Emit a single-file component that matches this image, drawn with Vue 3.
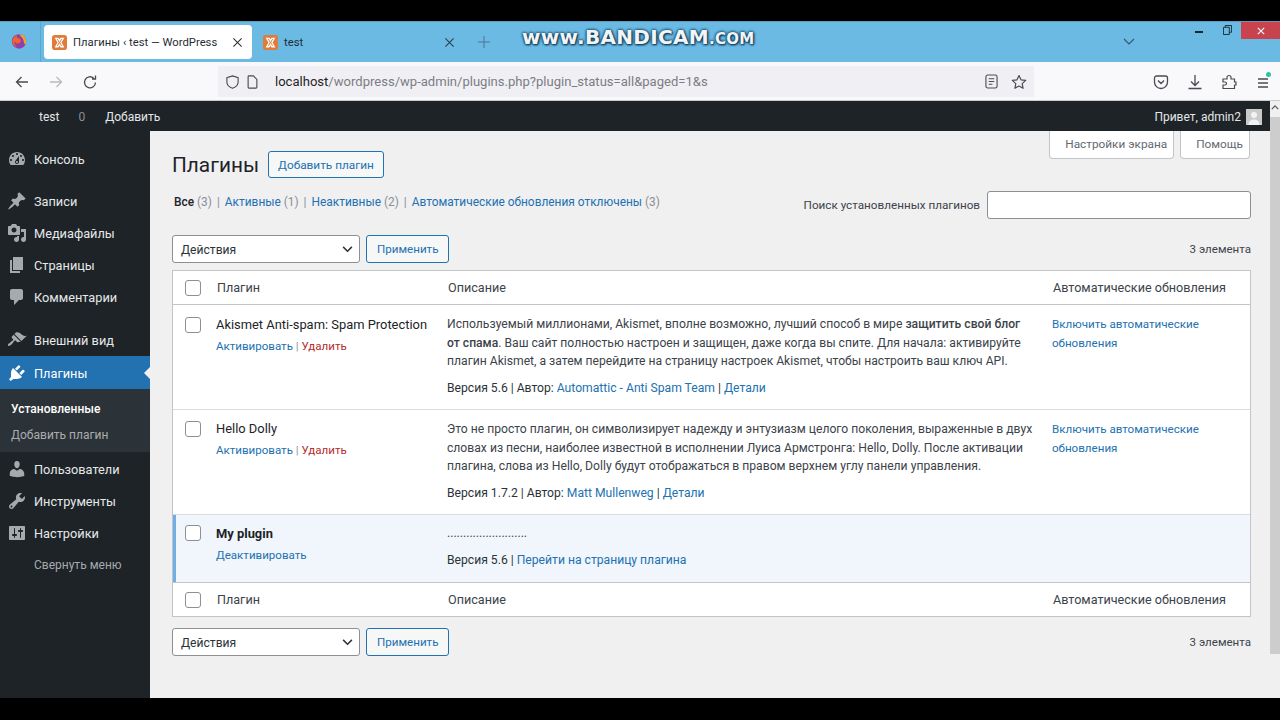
<script setup>
const menuTop = [
  { label: "Консоль", d: "M3.76 16h12.48c1.1-1.37 1.76-3.11 1.76-5 0-4.42-3.58-8-8-8s-8 3.58-8 8c0 1.89.66 3.63 1.76 5zM10 4c.55 0 1 .45 1 1s-.45 1-1 1-1-.45-1-1 .45-1 1-1zM6 6c.55 0 1 .45 1 1s-.45 1-1 1-1-.45-1-1 .45-1 1-1zm8 0c.55 0 1 .45 1 1s-.45 1-1 1-1-.45-1-1 .45-1 1-1zm-5.37 5.55L12 7v6c0 1.1-.9 2-2 2s-2-.9-2-2c0-.57.24-1.08.63-1.45zM4 10c.55 0 1 .45 1 1s-.45 1-1 1-1-.45-1-1 .45-1 1-1zm12 0c.55 0 1 .45 1 1s-.45 1-1 1-1-.45-1-1 .45-1 1-1zm-5 3c0-.55-.45-1-1-1s-1 .45-1 1 .45 1 1 1 1-.45 1-1z" },
];
const menuContent = [
  { label: "Записи", d: "M10.44 3.02l1.82-1.82 6.36 6.35-1.83 1.82c-1.05-.68-2.48-.57-3.41.36l-.75.75c-.92.93-1.04 2.35-.35 3.41l-1.83 1.82-2.41-2.41-2.8 2.79c-.42.42-3.38 2.71-3.8 2.29s1.86-3.39 2.28-3.81l2.79-2.79L4.1 9.36l1.83-1.82c1.05.69 2.48.57 3.4-.36l.75-.75c.93-.92 1.05-2.35.36-3.41z" },
  { label: "Медиафайлы", d: "M13 11V4c0-.55-.45-1-1-1h-1.67L9 1H5L3.67 3H2c-.55 0-1 .45-1 1v7c0 .55.45 1 1 1h10c.55 0 1-.45 1-1zM7 4.5c1.38 0 2.5 1.12 2.5 2.5S8.38 9.5 7 9.5 4.5 8.38 4.5 7 5.62 4.5 7 4.5zM14 6h5v10.5c0 1.38-1.12 2.5-2.5 2.5S14 17.88 14 16.5s1.12-2.5 2.5-2.5c.17 0 .34.02.5.05V9h-3V6zm-4 8.05V13h2v3.5c0 1.38-1.12 2.5-2.5 2.5S7 17.88 7 16.5 8.12 14 9.5 14c.17 0 .34.02.5.05z" },
  { label: "Страницы", d: "M6 15V2h10v13H6zm-1 1h8v2H3V5h2v11z" },
  { label: "Комментарии", d: "M5 2h9c1.1 0 2 .9 2 2v7c0 1.1-.9 2-2 2h-2l-5 5v-5H5c-1.1 0-2-.9-2-2V4c0-1.1.9-2 2-2z" },
];
const appearance = { label: "Внешний вид", d: "M14.48 11.06L7.41 3.99l1.5-1.5c.5-.56 2.3-.47 3.51.32 1.21.8 1.43 1.28 2.91 2.1 1.18.64 2.45 1.26 4.45.85zm-.71.71L6.7 4.7 4.93 6.47c-.39.39-.39 1.02 0 1.41l1.06 1.06c.39.39.39 1.03 0 1.42-.6.6-1.43 1.11-2.21 1.69-.35.26-.7.53-1.01.84C1.43 13.23.4 14.85 1.2 15.65s2.42-.23 3.76-1.57c.31-.31.58-.66.85-1.02.57-.78 1.08-1.61 1.69-2.21.39-.39 1.02-.39 1.41 0l1.06 1.06c.39.39 1.02.39 1.41 0z" };
const pluginsIcon = "M13.11 4.36L9.87 7.6 8 5.73l3.24-3.24c.35-.34 1.05-.2 1.56.32.52.51.66 1.21.31 1.55zm-8 1.77l.91-1.12 9.01 9.01-1.19.84c-.71.71-2.63 1.16-3.82 1.16H6.14L4.9 17.26c-.59.59-1.54.59-2.12 0-.59-.58-.59-1.53 0-2.12l1.24-1.24v-3.88c0-1.13.4-3.19 1.09-3.89zm7.26 3.97l3.24-3.24c.34-.35 1.04-.21 1.55.31.52.51.66 1.21.31 1.55l-3.24 3.25z";
const menuAfter = [
  { label: "Пользователи", d: "M10 9.25c-2.27 0-2.73-3.44-2.73-3.44C7 4.02 7.82 2 9.97 2c2.16 0 2.98 2.02 2.71 3.81 0 0-.41 3.44-2.68 3.44zm0 2.57L12.72 10c2.39 0 4.52 2.33 4.52 4.53v2.49s-3.65 1.13-7.24 1.13c-3.65 0-7.24-1.13-7.24-1.13v-2.49c0-2.25 1.94-4.48 4.47-4.48z" },
  { label: "Инструменты", d: "M16.68 9.77c-1.34 1.34-3.3 1.67-4.95.99l-5.41 6.52c-.99.99-2.59.99-3.58 0s-.99-2.59 0-3.57l6.52-5.42c-.68-1.65-.35-3.61.99-4.95 1.28-1.28 3.12-1.62 4.72-1.06l-2.89 2.89 2.82 2.82 2.86-2.87c.53 1.58.18 3.39-1.08 4.65zM3.81 16.21c.4.39 1.04.39 1.43 0 .4-.4.4-1.04 0-1.43-.39-.4-1.03-.4-1.43 0-.39.39-.39 1.03 0 1.43z" },
  { label: "Настройки", d: "M18 16V4c0-.55-.45-1-1-1H3c-.55 0-1 .45-1 1v12c0 .55.45 1 1 1h14c.55 0 1-.45 1-1zM8 11h1c.55 0 1 .45 1 1s-.45 1-1 1H8v1.5c0 .28-.22.5-.5.5s-.5-.22-.5-.5V13H6c-.55 0-1-.45-1-1s.45-1 1-1h1V5.5c0-.28.22-.5.5-.5s.5.22.5.5V11zm5-2h-1c-.55 0-1-.45-1-1s.45-1 1-1h1V5.5c0-.28.22-.5.5-.5s.5.22.5.5V7h1c.55 0 1 .45 1 1s-.45 1-1 1h-1v5.5c0 .28-.22.5-.5.5s-.5-.22-.5-.5V9z" },
];
</script>

<template>
  <div class="screen">
    <div class="bar-top"></div>

    <div class="tabbar">
      <svg class="fox" viewBox="0 0 20 20" width="18" height="18">
        <circle cx="10" cy="10.5" r="8" fill="#8f3fa8" />
        <path d="M10 2.5c5 0 8 3.6 8 8 0 1.4-.4 2.8-1.2 4C15 12 15.5 9 14 7c-.6-.9-1.2-1.4-2-2-.4-1-1-2-2-2.5z" fill="#f5a02a" />
        <path d="M3 8c1.5-3 3.5-4 5-4-.5 1-.5 2 0 2.5 1 .5 2.5.5 3.5 1.5 1 1.5.5 3.5-1.5 4.5-2 .8-4-.2-4.5-2C4.5 12 5 15 8 17 4 16 1.5 12 3 8z" fill="#f0642d" />
      </svg>
      <div class="tab-sep"></div>
      <div class="tab active">
        <svg class="xampp" viewBox="0 0 16 16" width="15" height="15"><rect width="16" height="16" rx="3" fill="#e07b39" /><path d="M4 3.5h2.5L8 6l1.5-2.5H12L9.5 8 12 12.5H9.5L8 10l-1.5 2.5H4L6.5 8z" fill="none" stroke="#fff" stroke-width="1.4" /></svg>
        <span class="tab-title">Плагины ‹ test — WordPress</span>
        <svg class="tab-x" viewBox="0 0 12 12" width="11" height="11"><path d="M1.5 1.5l9 9m0-9l-9 9" stroke="#2b2b33" stroke-width="1.1" /></svg>
      </div>
      <div class="tab second">
        <svg class="xampp" viewBox="0 0 16 16" width="15" height="15"><rect width="16" height="16" rx="3" fill="#e07b39" /><path d="M4 3.5h2.5L8 6l1.5-2.5H12L9.5 8 12 12.5H9.5L8 10l-1.5 2.5H4L6.5 8z" fill="none" stroke="#fff" stroke-width="1.4" /></svg>
        <span class="tab-title">test</span>
        <svg class="tab-x" viewBox="0 0 12 12" width="11" height="11"><path d="M1.5 1.5l9 9m0-9l-9 9" stroke="#2b3a48" stroke-width="1.1" /></svg>
      </div>
      <svg class="plus" viewBox="0 0 12 12" width="12" height="12"><path d="M6 0v12M0 6h12" stroke="#4a7590" stroke-width="1" /></svg>
      <svg class="chev" viewBox="0 0 12 8" width="12" height="8"><path d="M1 1l5 5 5-5" fill="none" stroke="#33586f" stroke-width="1.2" /></svg>
      <div class="win">
        <span class="min"></span>
        <svg class="restore" viewBox="0 0 10 11" width="9" height="10"><path d="M.5 2.5h6.5v8H.5zM2.5 2.5V.5h7v7.5H7" fill="none" stroke="#16262f" stroke-width="1" /></svg>
        <div class="close"><svg viewBox="0 0 10 10" width="8" height="8"><path d="M1 1l8 8m0-8l-8 8" stroke="#fff" stroke-width="1.4" /></svg></div>
      </div>
      <div class="watermark">www.BANDICAM<small>.COM</small></div>
    </div>

    <div class="toolbar">
      <svg class="tool first" viewBox="0 0 16 16" width="16" height="16"><path d="M14 8H2.5M7.5 3l-5 5 5 5" fill="none" stroke="#4a4a52" stroke-width="1.3" /></svg>
      <svg class="tool" viewBox="0 0 16 16" width="16" height="16"><path d="M2 8h11.5M8.5 3l5 5-5 5" fill="none" stroke="#b9b9be" stroke-width="1.3" /></svg>
      <svg class="tool" viewBox="0 0 16 16" width="16" height="16"><path d="M13.5 8.5a5.5 5.5 0 1 1-1.8-4.3M13.5 1.500v3.500H10" fill="none" stroke="#4a4a52" stroke-width="1.3" /></svg>
      <div class="urlbar">
        <svg viewBox="0 0 16 16" width="15" height="16"><path d="M8 1.5l6 1.8v4.7c0 3-2.5 5.500-6 6.700-3.500-1.200-6-3.700-6-6.700V3.300z" fill="none" stroke="#4a4a52" stroke-width="1.2" /></svg>
        <svg class="page" viewBox="0 0 12 16" width="11" height="14"><path d="M1 2a1 1 0 0 1 1-1h5l4 4v9a1 1 0 0 1-1 1H2a1 1 0 0 1-1-1z" fill="none" stroke="#4a4a52" stroke-width="1.3" /></svg>
        <span class="url"><b>localhost</b>/wordpress/wp-admin/plugins.php?plugin_status=all&amp;paged=1&amp;s</span>
        <svg class="reader" viewBox="0 0 14 16" width="13" height="15"><rect x="1" y="1" width="12" height="14" rx="2" fill="none" stroke="#4a4a52" stroke-width="1.2" /><path d="M4 5h6M4 8h6M4 11h4" stroke="#4a4a52" stroke-width="1.2" /></svg>
        <svg class="star" viewBox="0 0 16 16" width="16" height="16"><path d="M8 1.5l2 4.300 4.700.6-3.500 3.200.9 4.700L8 12l-4.100 2.300.9-4.700L1.300 6.400 6 5.800z" fill="none" stroke="#4a4a52" stroke-width="1.2" stroke-linejoin="round" /></svg>
      </div>
      <svg class="tool" viewBox="0 0 16 16" width="16" height="16"><path d="M1.5 4a2 2 0 0 1 2-2h9a2 2 0 0 1 2 2v4a6.500 6.500 0 0 1-13 0zM5 6.500l3 3 3-3" fill="none" stroke="#4a4a52" stroke-width="1.3" /></svg>
      <svg class="tool" viewBox="0 0 16 16" width="16" height="16"><path d="M8 1v10M4 7.500L8 11.500l4-4M1.500 14.500h13" fill="none" stroke="#4a4a52" stroke-width="1.3" /></svg>
      <svg class="tool" viewBox="0 0 16 16" width="16" height="16"><path d="M6 3.500a2 2 0 0 1 4 0V5h3.500v3H15v3h-1.500v3.500H2V11h2a1.500 1.500 0 0 0 0-3H2V5h4z" fill="none" stroke="#4a4a52" stroke-width="1.2" /></svg>
      <div class="tool burger">
        <svg viewBox="0 0 16 16" width="16" height="16"><path d="M3 5h10M3 9h10M3 13h10" stroke="#4a4a52" stroke-width="1.3" /></svg>
        <i class="dot"></i>
      </div>
    </div>

    <div class="page-wrap">
      <div class="wp">
        <div class="adminbar">
          <span class="ab-site">test</span>
          <span class="ab-count">0</span>
          <span>Добавить</span>
          <span class="ab-hello">Привет, admin2</span>
          <div class="avatar">
            <svg viewBox="0 0 16 16" width="16" height="16"><rect width="16" height="16" fill="#c8cacc" /><circle cx="8" cy="6" r="3" fill="#f2f2f2" /><path d="M2.5 16c0-4 2.500-5.500 5.500-5.500s5.500 1.500 5.500 5.500z" fill="#f2f2f2" /></svg>
          </div>
        </div>

        <div class="wp-body">
          <nav class="side">
            <div class="group">
              <div v-for="m in menuTop" :key="m.label" class="item">
                <svg viewBox="0 0 20 20" width="20" height="20"><path :d="m.d" /></svg>
                <span>{{ m.label }}</span>
              </div>
            </div>
            <div class="group wide">
              <div v-for="m in menuContent" :key="m.label" class="item">
                <svg viewBox="0 0 20 20" width="20" height="20"><path :d="m.d" /></svg>
                <span>{{ m.label }}</span>
              </div>
            </div>
            <div class="group">
              <div class="item">
                <svg viewBox="0 0 20 20" width="20" height="20"><path :d="appearance.d" /></svg>
                <span>{{ appearance.label }}</span>
              </div>
              <div class="item current">
                <svg viewBox="0 0 20 20" width="20" height="20"><path :d="pluginsIcon" /></svg>
                <span>Плагины</span>
                <i class="notch"></i>
              </div>
              <div class="sub">
                <div class="sub-item on">Установленные</div>
                <div class="sub-item">Добавить плагин</div>
              </div>
              <div v-for="m in menuAfter" :key="m.label" class="item">
                <svg viewBox="0 0 20 20" width="20" height="20"><path :d="m.d" /></svg>
                <span>{{ m.label }}</span>
              </div>
              <div class="item collapse"><span>Свернуть меню</span></div>
            </div>
          </nav>

          <main class="main">
            <div class="screen-tabs">
              <div class="screen-tab">Настройки экрана</div>
              <div class="screen-tab">Помощь</div>
            </div>

            <div class="title-row">
              <h1>Плагины</h1>
              <a class="btn">Добавить плагин</a>
            </div>

            <div class="filter-row">
              <ul class="views">
                <li><b>Все</b> <em>(3)</em> <i>|</i></li>
                <li><a>Активные</a> <em>(1)</em> <i>|</i></li>
                <li><a>Неактивные</a> <em>(2)</em> <i>|</i></li>
                <li><a>Автоматические обновления отключены</a> <em>(3)</em></li>
              </ul>
              <div class="search">
                <label>Поиск установленных плагинов</label>
                <div class="input"></div>
              </div>
            </div>

            <div class="nav-row">
              <div class="select">Действия
                <svg viewBox="0 0 12 8" width="11" height="7"><path d="M1 1l5 5 5-5" fill="none" stroke="#2c3338" stroke-width="1.7" /></svg>
              </div>
              <a class="btn">Применить</a>
              <span class="num">3 элемента</span>
            </div>

            <table class="plugins">
              <colgroup>
                <col class="c1" /><col class="c2" /><col class="c3" /><col />
              </colgroup>
              <thead>
                <tr>
                  <td class="chk"><span class="box"></span></td>
                  <td class="hd">Плагин</td>
                  <td class="hd">Описание</td>
                  <td class="hd">Автоматические обновления</td>
                </tr>
              </thead>
              <tbody>
                <tr>
                  <td class="chk"><span class="box"></span></td>
                  <td>
                    <div class="name">Akismet Anti-spam: Spam Protection</div>
                    <div class="acts"><a>Активировать</a> <i>|</i> <a class="del">Удалить</a></div>
                  </td>
                  <td>
                    <p class="desc">Используемый миллионами, Akismet, вполне возможно, лучший способ в мире <b>защитить свой блог<br />от спама</b>. Ваш сайт полностью настроен и защищен, даже когда вы спите. Для начала: активируйте<br />плагин Akismet, а затем перейдите на страницу настроек Akismet, чтобы настроить ваш ключ API.</p>
                    <p class="ver">Версия 5.6 | Автор: <a>Automattic - Anti Spam Team</a> | <a>Детали</a></p>
                  </td>
                  <td class="auto"><a>Включить автоматические<br />обновления</a></td>
                </tr>
                <tr>
                  <td class="chk"><span class="box"></span></td>
                  <td class="left">
                    <div class="name">Hello Dolly</div>
                    <div class="acts"><a>Активировать</a> <i>|</i> <a class="del">Удалить</a></div>
                  </td>
                  <td>
                    <p class="desc">Это не просто плагин, он символизирует надежду и энтузиазм целого поколения, выраженные в двух<br />словах из песни, наиболее известной в исполнении Луиса Армстронга: Hello, Dolly. После активации<br />плагина, слова из Hello, Dolly будут отображаться в правом верхнем углу панели управления.</p>
                    <p class="ver">Версия 1.7.2 | Автор: <a>Matt Mullenweg</a> | <a>Детали</a></p>
                  </td>
                  <td class="auto"><a>Включить автоматические<br />обновления</a></td>
                </tr>
                <tr class="active">
                  <td class="chk"><span class="box"></span></td>
                  <td>
                    <div class="name strong">My plugin</div>
                    <div class="acts"><a>Деактивировать</a></div>
                  </td>
                  <td>
                    <p class="desc">.........................</p>
                    <p class="ver">Версия 5.6 | <a>Перейти на страницу плагина</a></p>
                  </td>
                  <td></td>
                </tr>
              </tbody>
              <tfoot>
                <tr>
                  <td class="chk"><span class="box"></span></td>
                  <td class="hd">Плагин</td>
                  <td class="hd">Описание</td>
                  <td class="hd">Автоматические обновления</td>
                </tr>
              </tfoot>
            </table>

            <div class="nav-row bottom">
              <div class="select">Действия
                <svg viewBox="0 0 12 8" width="11" height="7"><path d="M1 1l5 5 5-5" fill="none" stroke="#2c3338" stroke-width="1.7" /></svg>
              </div>
              <a class="btn">Применить</a>
              <span class="num">3 элемента</span>
            </div>
          </main>
        </div>
      </div>

      <div class="scrollbar">
        <svg viewBox="0 0 10 6" width="8" height="5"><path d="M1 5l4-4 4 4" fill="none" stroke="#555" stroke-width="1.5" /></svg>
        <div class="thumb"></div>
      </div>
    </div>

    <div class="bar-bottom"></div>
  </div>
</template>

<style>
html,
body {
  margin: 0;
  background: #000;
}
</style>

<style scoped>
.screen {
  width: 1280px;
  height: 720px;
  display: flex;
  flex-direction: column;
  overflow: hidden;
  background: #000;
  font-family: Roboto, "Open Sans", sans-serif;
  font-size: 11.7px;
  color: #3c434a;
}
.bar-top {
  height: 21px;
}
.bar-bottom {
  height: 22px;
}

/* browser chrome */
.tabbar {
  height: 41px;
  background: #6bbae3;
  display: flex;
  align-items: flex-start;
  position: relative;
  border-top: 1px solid #5b9dbf;
  box-sizing: border-box;
}
.fox {
  margin: 10px 0 0 10px;
}
.tab-sep {
  width: 1px;
  height: 40px;
  background: #5fa6cc;
  margin-left: 12px;
}
.tab {
  width: 208px;
  height: 34px;
  margin: 3px 0 0 3px;
  padding: 0 9px 0 8px;
  box-sizing: border-box;
  display: flex;
  align-items: center;
  gap: 6px;
  color: #1f2d38;
  font-size: 11.25px;
}
.tab.second {
  width: 217px;
  margin-left: 0;
  padding: 0 14px 0 11px;
}
.tab.active {
  background: #fff;
  border-radius: 4px;
}
.tab-title {
  flex: 1;
  white-space: nowrap;
}
.plus {
  margin: 14px 0 0 9px;
}
.chev {
  margin: 16px 0 0 633px;
}
.win {
  margin-left: auto;
  display: flex;
  align-items: flex-start;
}
.min {
  width: 8px;
  height: 2px;
  background: #16262f;
  margin: 9px 20px 0 0;
}
.restore {
  margin: 3px 9px 0 0;
}
.close {
  width: 39px;
  height: 17px;
  background: #c9434f;
  display: flex;
  align-items: center;
  justify-content: center;
}
.watermark {
  position: absolute;
  left: 522px;
  top: 4px;
  color: #f2f4f6;
  font-family: "DejaVu Sans", sans-serif;
  font-weight: 700;
  font-size: 20px;
  line-height: 22px;
  letter-spacing: 0.3px;
  text-shadow: 0 0 3px #0d3c5c, 0 0 3px #0d3c5c, 1px 1px 2px #0d3c5c;
  white-space: nowrap;
}
.watermark small {
  font-size: 15px;
}
.toolbar {
  height: 39px;
  background: #f9f9fb;
  border-bottom: 1px solid #ccc;
  padding-top: 1px;
  box-sizing: border-box;
  display: flex;
  align-items: center;
}
.tool {
  margin-left: 18px;
  flex: none;
}
.tool.first {
  margin-left: 14px;
}
.urlbar {
  width: 816px;
  height: 31px;
  margin: 0 101px 0 120px;
  background: #f0f0f4;
  display: flex;
  align-items: center;
  padding-left: 7px;
  box-sizing: border-box;
}
.page {
  margin-left: 7px;
}
.url {
  margin-left: 17px;
  flex: 1;
  color: #7c7c84;
  font-size: 13.05px;
  white-space: nowrap;
}
.url b {
  color: #1f1f25;
  font-weight: 400;
}
.reader {
  margin-right: 13px;
}
.star {
  margin-right: 7px;
}
.burger {
  position: relative;
  height: 16px;
}
.dot {
  position: absolute;
  right: 0;
  top: -2px;
  width: 5px;
  height: 5px;
  border-radius: 50%;
  background: #2ac3a2;
}

/* wordpress page */
.page-wrap {
  flex: 1;
  min-height: 0;
  display: flex;
}
.wp {
  flex: 1;
  min-width: 0;
  display: flex;
  flex-direction: column;
  background: #f0f0f1;
}
.adminbar {
  height: 30px;
  background: #1d2327;
  color: #e4e6e7;
  display: flex;
  align-items: center;
  padding: 1px 8px 0 39px;
  box-sizing: border-box;
  font-size: 12px;
}
.ab-count {
  margin: 0 20px 0 19px;
  color: #8c8f94;
}
.ab-hello {
  margin-left: auto;
}
.avatar {
  margin-left: 5px;
  height: 16px;
}
.wp-body {
  flex: 1;
  min-height: 0;
  display: flex;
}
.side {
  width: 150px;
  background: #1d2327;
  padding-top: 12px;
  box-sizing: border-box;
  flex: none;
}
.group {
  margin-bottom: 10px;
}
.group.wide {
  margin-bottom: 11px;
}
.item {
  height: 32px;
  display: flex;
  align-items: center;
  padding-left: 7px;
  gap: 7px;
  color: #e6e8e9;
  font-size: 12.75px;
  position: relative;
  box-sizing: border-box;
}
.item svg {
  fill: #a7aaad;
  fill-rule: evenodd;
  flex: none;
}
.item.current {
  background: #2271b1;
  color: #fff;
  height: 33px;
  padding-top: 1px;
}
.item.current svg {
  fill: #fff;
}
.notch {
  position: absolute;
  right: 0;
  top: 11px;
  border: 6px solid transparent;
  border-right-color: #f0f0f1;
  border-left-width: 0;
}
.sub {
  height: 63px;
  margin-bottom: 1px;
  background: #2c3338;
  padding-left: 11px;
  font-size: 12px;
  color: #a9acaf;
}
.sub-item {
  height: 26px;
  line-height: 26px;
}
.sub-item.on {
  padding-top: 7px;
  color: #fff;
  font-weight: 500;
}
.item.collapse {
  padding-left: 34px;
  color: #a7aaad;
  font-size: 12px;
}
.main {
  flex: 1;
  min-width: 0;
  padding: 0 19px 0 22px;
  position: relative;
}
.screen-tabs {
  position: absolute;
  top: 0;
  right: 20px;
  display: flex;
  gap: 6px;
}
.screen-tab {
  height: 27px;
  line-height: 27px;
  padding: 0 6px 0 15px;
  background: #fff;
  border: 1px solid #c3c4c7;
  border-top: 0;
  border-radius: 0 0 4px 4px;
  color: #646970;
  font-size: 11.8px;
}
.title-row {
  display: flex;
  align-items: center;
  height: 27px;
  padding-top: 20px;
  gap: 9px;
}
h1 {
  margin: 0;
  font-size: 20.8px;
  font-weight: 400;
  color: #1d2327;
}
.btn {
  height: 27px;
  line-height: 26px;
  box-sizing: border-box;
  padding: 0 9px;
  border: 1px solid #2271b1;
  border-radius: 3px;
  background: #f6f7f7;
  color: #2271b1;
  font-size: 11.8px;
}
.filter-row {
  display: flex;
  justify-content: space-between;
  align-items: flex-start;
  margin-top: 13px;
  height: 44px;
}
.views {
  list-style: none;
  margin: 0;
  padding: 2px 0 0 2px;
  display: flex;
  gap: 4px;
  font-size: 11.9px;
  line-height: 18px;
  color: #646970;
  white-space: nowrap;
}
.views b {
  color: #1d2327;
  font-weight: 500;
}
.views a {
  color: #2271b1;
}
.views em,
.views i {
  font-style: normal;
  color: #8a8f94;
}
.views i {
  margin: 0 1px 0 2px;
}
.search {
  display: flex;
  align-items: center;
  gap: 7px;
  color: #3c434a;
}
.input {
  width: 264px;
  height: 28px;
  background: #fff;
  border: 1px solid #8c8f94;
  border-radius: 3px;
  box-sizing: border-box;
}
.nav-row {
  display: flex;
  align-items: center;
  height: 28px;
  gap: 6px;
}
.nav-row .btn {
  height: 28px;
  line-height: 27px;
  padding: 0 10px;
  font-size: 11.6px;
}
.select {
  width: 188px;
  height: 28px;
  box-sizing: border-box;
  background: #fff;
  border: 1px solid #8c8f94;
  border-radius: 3px;
  display: flex;
  align-items: center;
  justify-content: space-between;
  padding: 1px 6px 0 8px;
  color: #2c3338;
  font-size: 12.1px;
}
.num {
  margin-left: auto;
  color: #3c434a;
  font-size: 11.55px;
}
.plugins {
  width: 1079px;
  margin-top: 7px;
  table-layout: fixed;
  border-collapse: separate;
  border-spacing: 0;
  background: #fff;
  border: 1px solid #c3c4c7;
  box-sizing: border-box;
}
.c1 {
  width: 43px;
}
.c2 {
  width: 231px;
}
.c3 {
  width: 605px;
}
td {
  padding: 0;
  vertical-align: top;
}
thead td,
tfoot td {
  height: 33px;
  vertical-align: middle;
}
thead td {
  border-bottom: 1px solid #c3c4c7;
}
tfoot td {
  border-top: 1px solid #c3c4c7;
}
.hd {
  padding-left: 1px;
  color: #3c434a;
  font-size: 12.6px;
}
.chk {
  text-align: left;
  padding-left: 12px;
}
.box {
  display: block;
  width: 14px;
  height: 14px;
  border: 1px solid #8c8f94;
  border-radius: 3px;
  background: #fff;
}
tbody td {
  border-bottom: 1px solid #dcdcde;
  padding-top: 10px;
}
tbody td.left {
  padding-top: 9px;
}
tbody tr {
  height: 105px;
}
tbody tr:last-child td {
  border-bottom: 0;
  padding-top: 9px;
}
tbody .chk {
  padding-top: 12px;
}
tbody tr:nth-child(2) .chk {
  padding-top: 11px;
}
tbody tr:last-child .chk {
  padding-top: 10px;
}
tbody tr.active {
  height: 67px;
}
tr.active td {
  background: #f0f6fc;
}
tr.active .chk {
  box-shadow: inset 3px 0 0 #72aee6;
}
.name {
  font-size: 12.9px;
  line-height: 20px;
  color: #1d2327;
  white-space: nowrap;
}
.name.strong {
  font-weight: 700;
}
.acts {
  margin-top: 2px;
  line-height: 19px;
  font-size: 11.55px;
  color: #8c8f94;
}
.acts a {
  color: #2271b1;
}
.acts a.del {
  color: #b32d2e;
}
.acts i {
  font-style: normal;
}
.desc {
  margin: 0;
  line-height: 18.5px;
  font-size: 12.15px;
  color: #3c434a;
  white-space: nowrap;
}
.desc b {
  font-weight: 500;
}
.ver {
  margin: 8px 0 0;
  line-height: 18px;
  font-size: 12.15px;
  color: #2c3338;
  white-space: nowrap;
}
.ver a,
.auto a {
  color: #2271b1;
}
.auto {
  line-height: 18.5px;
  font-size: 11.6px;
}
.bottom {
  margin-top: 11px;
}
.scrollbar {
  width: 10px;
  background: #f0f0f0;
  display: flex;
  flex-direction: column;
  align-items: center;
  padding-top: 4px;
  box-sizing: border-box;
}
.thumb {
  width: 100%;
  height: 537px;
  margin-top: 7px;
  background: #cdcdcd;
  flex: none;
}
</style>
